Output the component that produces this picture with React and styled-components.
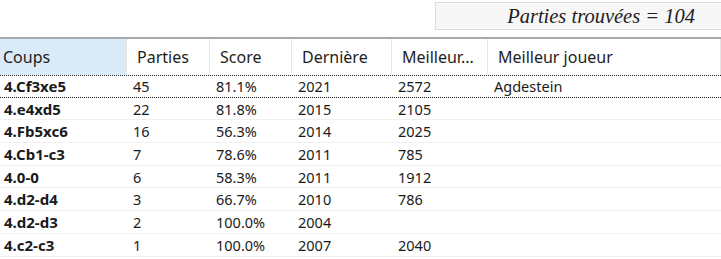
import React from "react"
import styled, { createGlobalStyle } from "styled-components"

const Global = createGlobalStyle`
  html, body { margin: 0; padding: 0; background: #fff; }
  body { font-family: "Noto Sans", "Open Sans", sans-serif; color: #1a1a1a; }
`

const Page = styled.div`
  width: 721px;
  height: 259px;
  overflow: hidden;
  display: flex;
  flex-direction: column;
`

const StatusBar = styled.div`
  display: flex;
  justify-content: flex-end;
  padding-top: 2px;
  height: 37px;
  box-sizing: border-box;
`

const Found = styled.div`
  width: 290px;
  height: 28px;
  box-sizing: border-box;
  margin-right: -4px;
  background: #f7f7f7;
  border: 1px solid #dcdcdc;
  font-family: "Liberation Serif", serif;
  font-style: italic;
  font-size: 20.5px;
  color: #222;
  display: flex;
  align-items: center;
  justify-content: flex-end;
  padding-right: 29px;
`

const Table = styled.div`
  border-top: 2px solid #a8a8a8;
  display: flex;
  flex-direction: column;
`

const cols = "127px 83px 82px 100px 96px 1fr"

const Header = styled.div`
  display: grid;
  grid-template-columns: ${cols};
  height: 36px;
`

const HeadCell = styled.div`
  display: flex;
  align-items: center;
  font-size: 16px;
  color: #1e1e1e;
  padding-left: ${p => (p.$first ? 3 : 10)}px;
  border-right: 1px solid #e5e5e5;
  background: ${p => (p.$sorted ? "#d9eaf8" : "#fff")};
  white-space: nowrap;
  overflow: hidden;
`

const Row = styled.div`
  display: grid;
  grid-template-columns: ${cols};
  height: 22.7px;
  box-sizing: border-box;
  border-bottom: 1px solid #f0f0f0;
  ${p =>
    p.$focus &&
    `border-top: 1px dotted #222; border-bottom: 1px dotted #222;`}
`

const Cell = styled.div`
  display: flex;
  align-items: center;
  font-size: ${p => (p.$first ? 15 : 14.5)}px;
  padding-left: ${p => (p.$first ? 4 : 6)}px;
  font-weight: ${p => (p.$first ? 700 : 400)};
  color: #1a1a1a;
  white-space: nowrap;
`

const heads = ["Coups", "Parties", "Score", "Dernière", "Meilleur...", "Meilleur joueur"]

const rows = [
  ["4.Cf3xe5", "45", "81.1%", "2021", "2572", "Agdestein"],
  ["4.e4xd5", "22", "81.8%", "2015", "2105", ""],
  ["4.Fb5xc6", "16", "56.3%", "2014", "2025", ""],
  ["4.Cb1-c3", "7", "78.6%", "2011", "785", ""],
  ["4.0-0", "6", "58.3%", "2011", "1912", ""],
  ["4.d2-d4", "3", "66.7%", "2010", "786", ""],
  ["4.d2-d3", "2", "100.0%", "2004", "", ""],
  ["4.c2-c3", "1", "100.0%", "2007", "2040", ""],
]

export default function App() {
  return (
    <Page>
      <Global />
      <StatusBar>
        <Found>Parties trouvées = 104</Found>
      </StatusBar>
      <Table>
        <Header>
          {heads.map((h, i) => (
            <HeadCell key={h} $first={i === 0} $sorted={i === 0}>{h}</HeadCell>
          ))}
        </Header>
        {rows.map((r, i) => (
          <Row key={r[0]} $focus={i === 0}>
            {r.map((c, j) => (
              <Cell key={j} $first={j === 0}>{c}</Cell>
            ))}
          </Row>
        ))}
      </Table>
    </Page>
  )
}
